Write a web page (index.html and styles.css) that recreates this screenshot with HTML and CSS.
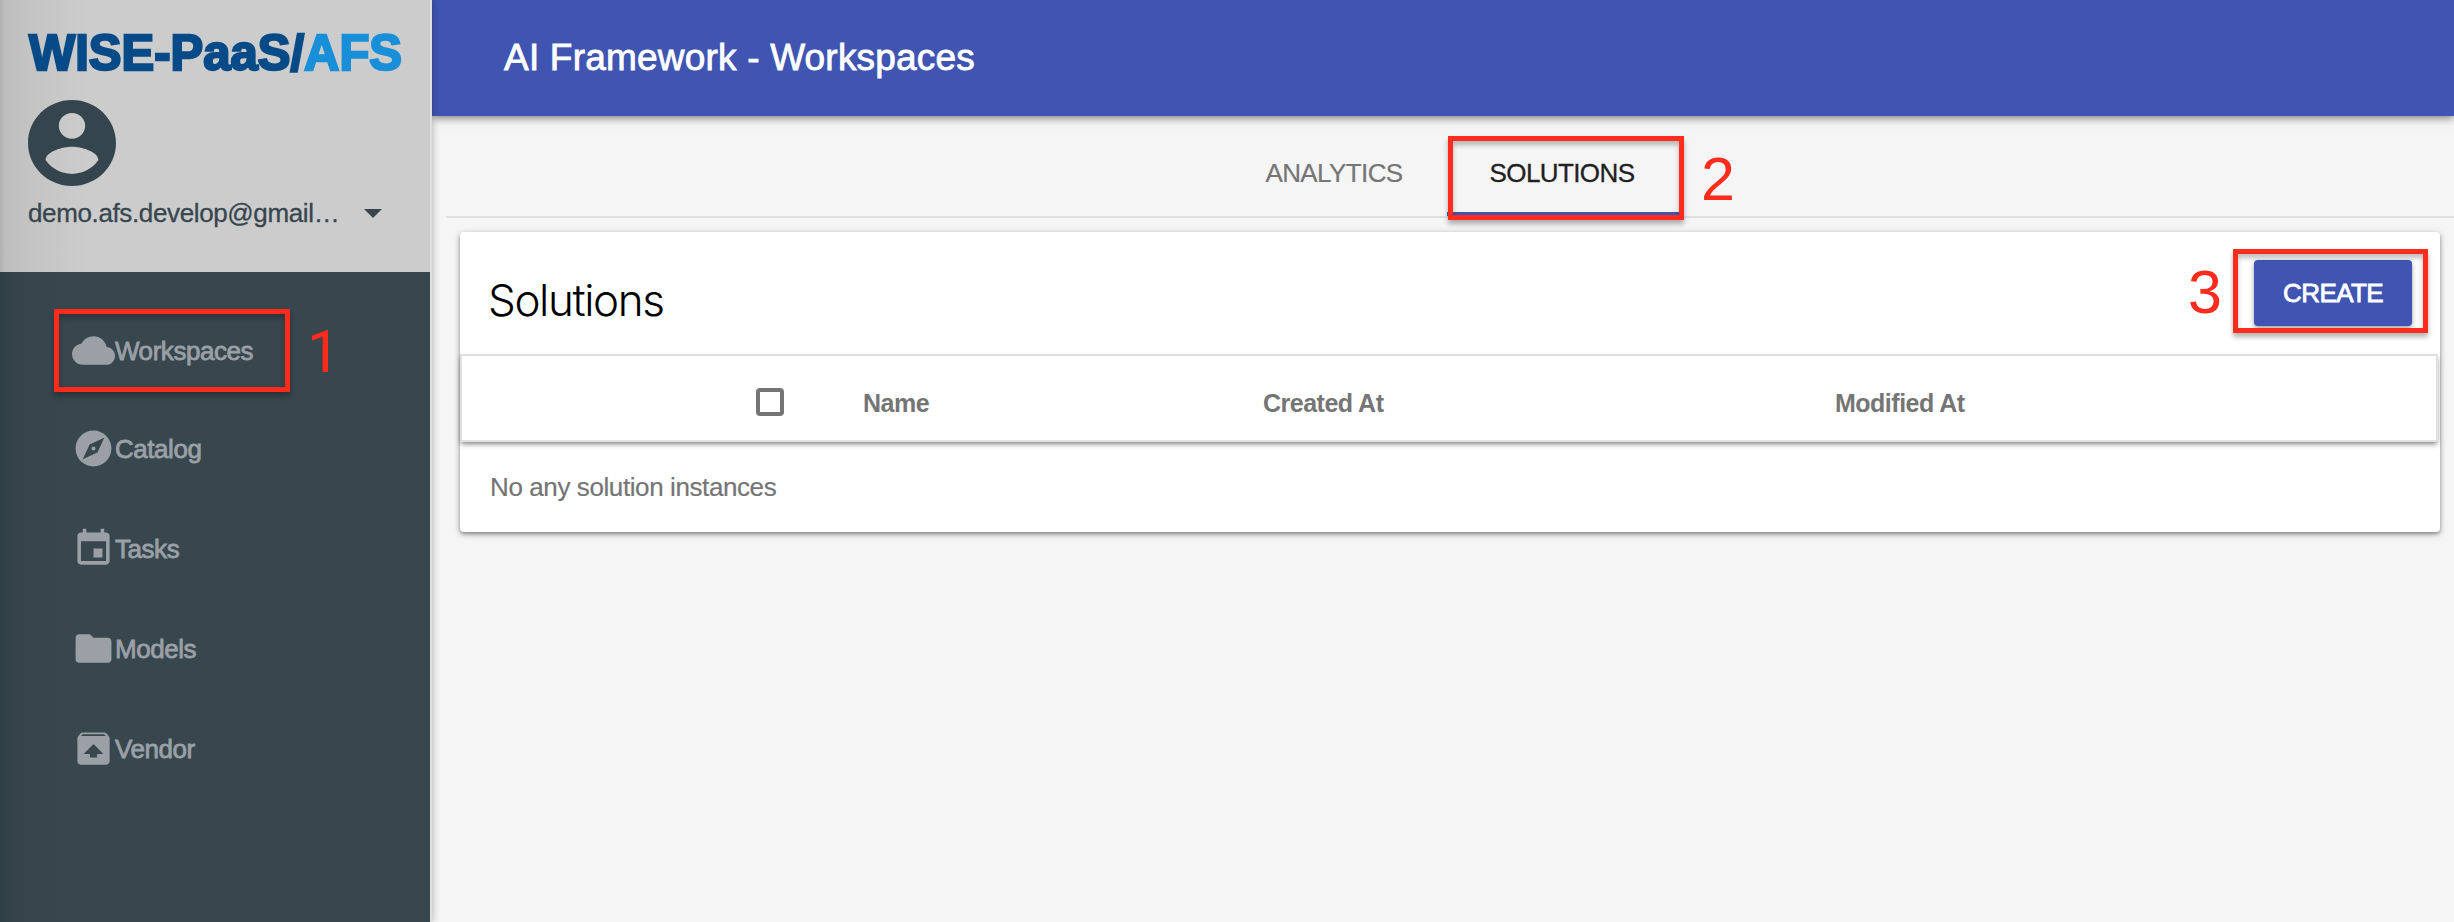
FILE: index.html
```html
<!DOCTYPE html>
<html lang="en">
<head>
<meta charset="utf-8">
<title>AI Framework - Workspaces</title>
<link rel="stylesheet" href="styles.css">
</head>
<body>
<aside class="sidebar">
  <div class="profile">
    <svg class="logo" viewBox="0 0 380 70" role="img" aria-label="WISE-PaaS/AFS">
      <text class="logo-main" x="1" y="52" textLength="373" lengthAdjust="spacingAndGlyphs">WISE-PaaS/<tspan class="logo-sub">AFS</tspan></text>
    </svg>
    <svg class="avatar" viewBox="2 2 20 20" preserveAspectRatio="none"><path d="M12 2C6.480 2 2 6.480 2 12s4.480 10 10 10 10-4.480 10-10S17.520 2 12 2zm0 3c1.660 0 3 1.340 3 3s-1.340 3-3 3-3-1.340-3-3 1.340-3 3-3zm0 14.200c-2.500 0-4.710-1.280-6-3.220.030-1.990 4-3.080 6-3.080 1.990 0 5.970 1.090 6 3.080-1.290 1.940-3.500 3.220-6 3.220z"/></svg>
    <div class="account">
      <span class="email">demo.afs.develop@gmail…</span>
      <span class="caret"></span>
    </div>
  </div>
  <nav class="nav">
    <a class="nav-item"><svg viewBox="0 0 24 24"><path d="M19.350 10.040C18.670 6.590 15.640 4 12 4 9.110 4 6.600 5.640 5.350 8.040 2.340 8.360 0 10.910 0 14c0 3.310 2.690 6 6 6h13c2.760 0 5-2.240 5-5 0-2.640-2.050-4.780-4.650-4.960z"/></svg><span>Workspaces</span></a>
    <a class="nav-item"><svg viewBox="0 0 24 24"><path d="M12 10.900c-.610 0-1.100.490-1.100 1.100s.490 1.100 1.100 1.100c.610 0 1.100-.490 1.100-1.100s-.490-1.100-1.100-1.100zM12 2C6.480 2 2 6.480 2 12s4.480 10 10 10 10-4.480 10-10S17.520 2 12 2zm2.190 12.190L6 18l3.810-8.190L18 6l-3.810 8.190z"/></svg><span>Catalog</span></a>
    <a class="nav-item"><svg viewBox="0 0 24 24"><path d="M17 12h-5v5h5v-5zM16 1v2H8V1H6v2H5c-1.110 0-1.990.900-1.990 2L3 19c0 1.100.890 2 2 2h14c1.100 0 2-.900 2-2V5c0-1.100-.900-2-2-2h-1V1h-2zm3 18H5V8h14v11z"/></svg><span>Tasks</span></a>
    <a class="nav-item"><svg viewBox="0 0 24 24"><path d="M10 4H4c-1.100 0-1.990.900-1.990 2L2 18c0 1.100.900 2 2 2h16c1.100 0 2-.900 2-2V8c0-1.100-.900-2-2-2h-8l-2-2z"/></svg><span>Models</span></a>
    <a class="nav-item"><svg viewBox="0 0 24 24"><path d="M20.550 5.220l-1.390-1.680C18.880 3.210 18.470 3 18 3H6c-.470 0-.880.210-1.150.550L3.460 5.220C3.170 5.570 3 6.010 3 6.500V19c0 1.100.890 2 2 2h14c1.100 0 2-.900 2-2V6.500c0-.490-.170-.930-.450-1.280zM12 9.500l5.500 5.500H14v2h-4v-2H6.500L12 9.500zM5.120 5l.820-1h12l.930 1H5.120z"/></svg><span>Vendor</span></a>
  </nav>
</aside>
<main class="main">
  <header class="topbar"><h1>AI Framework - Workspaces</h1></header>
  <div class="tabs">
    <div class="tab">ANALYTICS</div>
    <div class="tab tab-active">SOLUTIONS</div>
  </div>
  <section class="card">
    <div class="card-head">
      <h2>Solutions</h2>
      <button class="create">CREATE</button>
    </div>
    <div class="table-head">
      <span class="checkbox"></span>
      <span>Name</span>
      <span>Created At</span>
      <span>Modified At</span>
    </div>
    <p class="empty">No any solution instances</p>
  </section>
</main>
<div class="mark mark-1"></div><span class="step step-1">1</span>
<div class="mark mark-2"></div><span class="step step-2">2</span>
<div class="mark mark-3"></div><span class="step step-3">3</span>
</body>
</html>
```
FILE: styles.css
```css
* { box-sizing: border-box; }
body {
  margin: 0;
  position: relative;
  display: flex;
  width: 2454px;
  height: 922px;
  overflow: hidden;
  background: #f5f5f5;
  font: 26px/30px "Liberation Sans", Arial, sans-serif;
}

/* Sidebar */
.sidebar {
  position: relative;
  z-index: 2;
  width: 432px;
  flex: none;
  display: flex;
  flex-direction: column;
  border-right: 2px solid #e0e0e0;
  background: linear-gradient(90deg, #2f3f46 0, #35444b 14px, #38464e 70px);
  box-shadow: 0 0 8px rgba(0, 0, 0, .3);
}
.profile {
  height: 272px;
  padding: 18px 0 0 28px;
  background: linear-gradient(90deg, #b0b0b0 0, #bebebe 5px, #c5c5c5 35px, #ccc 90px);
}
.logo { display: block; width: 380px; height: 70px; overflow: visible; }
.logo text { font: bold 50px "Liberation Sans", Arial, sans-serif; stroke-width: 2.4px; }
.logo-main { fill: #064b88; stroke: #064b88; }
.logo-sub { fill: #188fd8; stroke: #188fd8; }
.avatar { display: block; width: 88px; height: 86px; margin-top: 12px; fill: #35454d; }
.account { display: flex; align-items: center; margin-top: 12px; color: #37464e; }
.email { width: 336px; letter-spacing: -.37px; white-space: nowrap; -webkit-text-stroke: .3px; }
.caret { border: 9px solid transparent; border-top-color: #37464e; border-bottom: 0; }
.nav { display: flex; flex-direction: column; padding: 28px 0 0 72px; }
.nav-item {
  display: flex;
  align-items: center;
  height: 100px;
  color: #9aa0a6;
  letter-spacing: -.45px;
  -webkit-text-stroke: .8px;
}
.nav-item:first-child { height: 98px; padding-top: 2px; }
.nav-item span { padding-top: 2px; }
.nav-item svg { width: 43px; height: 43px; fill: #9aa0a6; stroke: none; }

/* Main column */
.main { flex: 1; min-width: 0; }
.topbar {
  display: flex;
  align-items: center;
  height: 116px;
  padding-left: 72px;
  background: #4055b2;
  box-shadow: 0 2px 8px rgba(0, 0, 0, .5);
}
h1 { margin: 0; font-size: 37px; font-weight: 400; line-height: 44px; letter-spacing: .2px; color: #fff; -webkit-text-stroke: .8px; }
.tabs {
  display: flex;
  justify-content: center;
  height: 102px;
  margin-left: 14px;
  border-bottom: 2px solid #e0e0e0;
}
.tab { width: 226px; padding: 42px 0 0; text-align: center; letter-spacing: -.6px; color: #757575; -webkit-text-stroke: .2px; }
.tab-active { width: 232px; padding-right: 2px; color: #212121; border-bottom: 4px solid #4055b2; -webkit-text-stroke: .3px; }
.card {
  width: 1980px;
  height: 300px;
  margin: 14px 0 0 28px;
  border-radius: 4px;
  background: #fff;
  box-shadow: 0 2px 6px rgba(0, 0, 0, .35), 0 2px 3px rgba(0, 0, 0, .2);
}
.card-head { display: flex; justify-content: space-between; height: 122px; padding: 28px 28px 0 28px; }
h2 { margin: 15px 0 0; font: 300 44px/50px Inter, "Liberation Sans", sans-serif; letter-spacing: -1.4px; color: #000; }
.create {
  width: 158px;
  height: 66px;
  padding: 1px 0 0;
  border: 0;
  border-radius: 4px;
  background: #4055b2;
  box-shadow: 0 2px 5px rgba(0, 0, 0, .4);
  font: 26px "Liberation Sans", Arial, sans-serif;
  letter-spacing: -.6px;
  color: #fff;
  -webkit-text-stroke: .8px;
}
.table-head {
  display: grid;
  grid-template-columns: 107px 400px 572px 1fr;
  align-items: center;
  width: 1978px;
  height: 88px;
  padding: 10px 0 0 294px;
  border: 2px solid #e0e0e0;
  box-shadow: 0 3px 5px -1px rgba(0, 0, 0, .5);
  font-size: 25px;
  font-weight: 700;
  letter-spacing: -.5px;
  color: #757575;
}
.checkbox { width: 28px; height: 28px; margin-top: -2px; border: 4px solid #757575; border-radius: 4px; }
.empty { margin: 0; padding: 30px 0 0 30px; letter-spacing: -.4px; color: #757575; -webkit-text-stroke: .2px; }

/* Numbered callouts lying over the interface */
.mark {
  position: absolute;
  z-index: 3;
  width: 236px;
  height: 84px;
  border: 5px solid #ff2b1c;
  box-shadow: 0 4px 5px rgba(0, 0, 0, .3), inset 0 4px 5px rgba(0, 0, 0, .25);
}
.mark-1 { left: 54px; top: 309px; height: 83px; }
.mark-2 { left: 1448px; top: 136px; }
.mark-3 { left: 2233px; top: 249px; width: 195px; }
.step { position: absolute; z-index: 3; font-size: 61px; line-height: 60px; color: #ff2b1c; }
.step-1 { left: 307px; top: 322px; font-family: Roboto, "Liberation Sans", sans-serif; font-size: 59px; }
.step-2 { left: 1701px; top: 149px; }
.step-3 { left: 2188px; top: 262px; }
```
